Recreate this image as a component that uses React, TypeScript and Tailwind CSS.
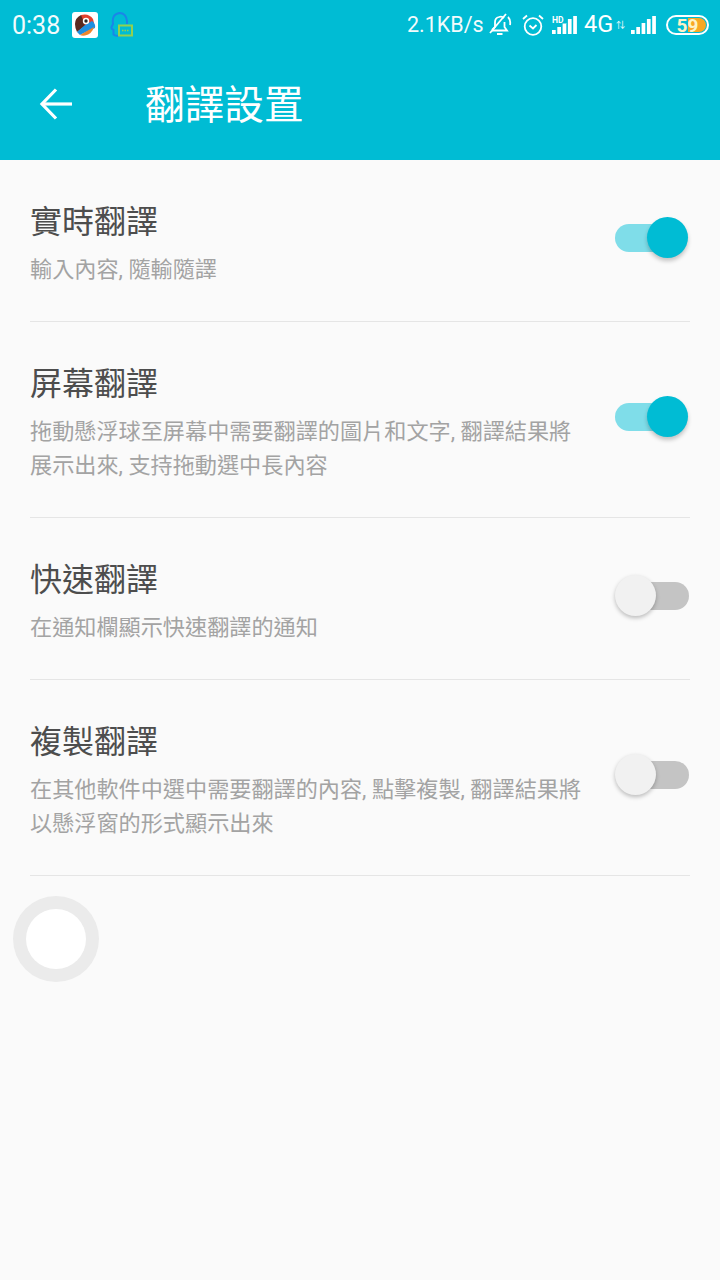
import React from "react";

const rows = [
  { title: "實時翻譯", sub: "輸入內容, 隨輸隨譯", on: true },
  { title: "屏幕翻譯", sub: "拖動懸浮球至屏幕中需要翻譯的圖片和文字, 翻譯結果將展示出來, 支持拖動選中長內容", on: true },
  { title: "快速翻譯", sub: "在通知欄顯示快速翻譯的通知", on: false },
  { title: "複製翻譯", sub: "在其他軟件中選中需要翻譯的內容, 點擊複製, 翻譯結果將以懸浮窗的形式顯示出來", on: false },
];

function Toggle({ on }: { on: boolean }) {
  if (on) {
    return (
      <div className="relative mb-[5px] h-[41px] w-[74px] shrink-0">
        <div className="absolute left-0 top-[7px] h-[28px] w-[60px] rounded-full bg-[#7fdde9]" />
        <div className="absolute left-[32px] top-0 h-[41px] w-[41px] rounded-full bg-[#00bcd4] shadow-[0_3px_4px_rgba(0,0,0,0.22)]" />
      </div>
    );
  }
  return (
    <div className="relative mb-[5px] h-[41px] w-[74px] shrink-0">
      <div className="absolute right-0 top-[7px] h-[28px] w-[60px] rounded-full bg-[#c4c4c4]" />
      <div className="absolute left-0 top-0 h-[41px] w-[41px] rounded-full bg-[#f1f1f1] shadow-[0_2px_4px_rgba(0,0,0,0.25)]" />
    </div>
  );
}

function Parrot() {
  return (
    <svg width="26" height="26" viewBox="0 0 26 26">
      <rect width="26" height="26" rx="3" fill="#fff" />
      <path d="M9 3 Q17 1 21 7 L22 11 L14 15 L8 12Z" fill="#e2432f" />
      <path d="M3 12 Q3 6 9 3 L11 8 L13 14 L5 20 Q3 16 3 12Z" fill="#5a2a20" />
      <path d="M5 20 L13 13 L20 9 Q24 12 23 16 L12 21 L8 23Z" fill="#1f8fe0" />
      <path d="M8 23 L22 15 Q20 22 13 23.500 Q10 24 8 23Z" fill="#f0862a" />
      <circle cx="14" cy="9" r="3.200" fill="#fff" />
      <circle cx="14" cy="9" r="1.700" fill="#2a2a2a" />
    </svg>
  );
}

function Headset() {
  return (
    <svg width="24" height="26" viewBox="0 0 24 26" fill="none">
      <path d="M9 24 Q5 24 3.500 22.500 L3.500 18 Q1 17 1.500 15 L3 12 Q1.500 2 9.500 1 Q16 1 17 9 L17 12" stroke="#1a86e8" strokeWidth="2" />
      <rect x="9" y="13.500" width="13" height="10" fill="#00bcd4" stroke="#92d050" strokeWidth="2" />
      <path d="M12 18.500h7" stroke="#92d050" strokeWidth="1.500" strokeDasharray="1.500 1" />
    </svg>
  );
}

function BellOff() {
  return (
    <svg width="23" height="24" viewBox="0 0 23 24" fill="none" stroke="#fff" strokeWidth="1.800">
      <path d="M3 17 L6 14 V9 Q6 5 10 4 Q13 3 15 5 M15.500 9 V14 L18 17.500 H3 M8 21 H13.500" />
      <path d="M1 20 L17 1" />
      <path d="M19 4 Q22 7 21 12" />
    </svg>
  );
}

function Alarm() {
  return (
    <svg width="22" height="22" viewBox="0 0 22 22" fill="none" stroke="#fff" strokeWidth="1.800">
      <circle cx="11" cy="12.500" r="8.300" />
      <path d="M7.500 11.500 L11 14.500 L14.500 11" />
      <path d="M1 5 L5 1.500 M21 5 L17 1.500" />
    </svg>
  );
}

function Signal({ hd }: { hd?: boolean }) {
  const bars = [
    { x: 0, h: 4 },
    { x: 5.300, h: 7 },
    { x: 10.600, h: 11 },
    { x: 15.900, h: 15 },
    { x: 21.200, h: 18 },
  ];
  return (
    <svg width="25" height="18" viewBox="0 0 25 18" fill="#fff">
      {bars.map((b) => (
        <rect key={b.x} x={b.x} y={18 - b.h} width="3.700" height={b.h} />
      ))}
      {hd && (
        <>
          <rect x="0" y="0" width="14" height="7.500" fill="#00bcd4" />
          <text x="0" y="7" fontSize="8.500" fontWeight="700" fontFamily="Roboto, sans-serif">HD</text>
        </>
      )}
    </svg>
  );
}

function Battery() {
  return (
    <div className="relative h-[20px] w-[43px] overflow-hidden rounded-full border-2 border-white">
      <div className="absolute bottom-[1px] right-[1px] top-[1px] w-[18px] rounded-r-full bg-[#f9a825]" />
      <span className="absolute inset-0 flex items-center justify-center text-[19px] font-bold leading-none text-[#fdf3c8]">59</span>
    </div>
  );
}

export default function App() {
  return (
    <div className="relative flex h-[1280px] w-[720px] flex-col overflow-hidden bg-[#fafafa] font-['Roboto','Noto_Sans_CJK_TC',sans-serif]">
      <header className="h-[160px] shrink-0 bg-[#00bcd4] text-white">
        {/* status bar */}
        <div className="flex h-[50px] items-center pl-[12px] pr-[11px]">
          <span className="w-[48px] text-[25px] leading-none opacity-95">0:38</span>
          <div className="ml-[12px]"><Parrot /></div>
          <div className="ml-[12px]"><Headset /></div>
          <div className="ml-auto flex items-center">
            <span className="w-[78px] whitespace-nowrap text-[21.5px] leading-none opacity-95">2.1KB/s</span>
            <div className="ml-[4px]"><BellOff /></div>
            <div className="ml-[10px]"><Alarm /></div>
            <div className="ml-[8px]"><Signal hd /></div>
            <span className="ml-[7px] w-[29px] text-[23.5px] leading-none">4G</span>
            <span className="ml-[3px] w-[10px] text-[9px] leading-none">⇅</span>
            <div className="ml-[5px]"><Signal /></div>
            <div className="ml-[10px]"><Battery /></div>
          </div>
        </div>
        {/* toolbar */}
        <div className="flex h-[110px] items-center">
          <svg className="mb-[3px] ml-[39px]" width="34" height="34" viewBox="0 0 34 34" fill="none" stroke="#fff" strokeWidth="3.200">
            <path d="M33 17 H4" />
            <path d="M17 2.500 L3 17 L17 31.500" />
          </svg>
          <h1 className="ml-[72px] mt-[2px] text-[39.7px] font-normal leading-none">翻譯設置</h1>
        </div>
      </header>

      <div className="flex flex-col">
        {rows.map((r) => (
          <div key={r.title} className="mx-[30px] flex items-center justify-between border-b border-[#e5e5e5] pb-[35px] pt-[42px]">
            <div className="w-[556px]">
              <div className="text-[32px] leading-[40px] text-[#4d4d4d]">{r.title}</div>
              <div className="mt-[10px] text-[22.15px] leading-[34px] text-[#a3a3a3]">{r.sub}</div>
            </div>
            <div className="relative -top-[4px] mr-px"><Toggle on={r.on} /></div>
          </div>
        ))}
      </div>

      {/* floating ball */}
      <div className="absolute left-[13px] top-[896px] flex h-[86px] w-[86px] items-center justify-center rounded-full bg-[#ebebeb]">
        <div className="h-[60px] w-[60px] rounded-full bg-white" />
      </div>
    </div>
  );
}
